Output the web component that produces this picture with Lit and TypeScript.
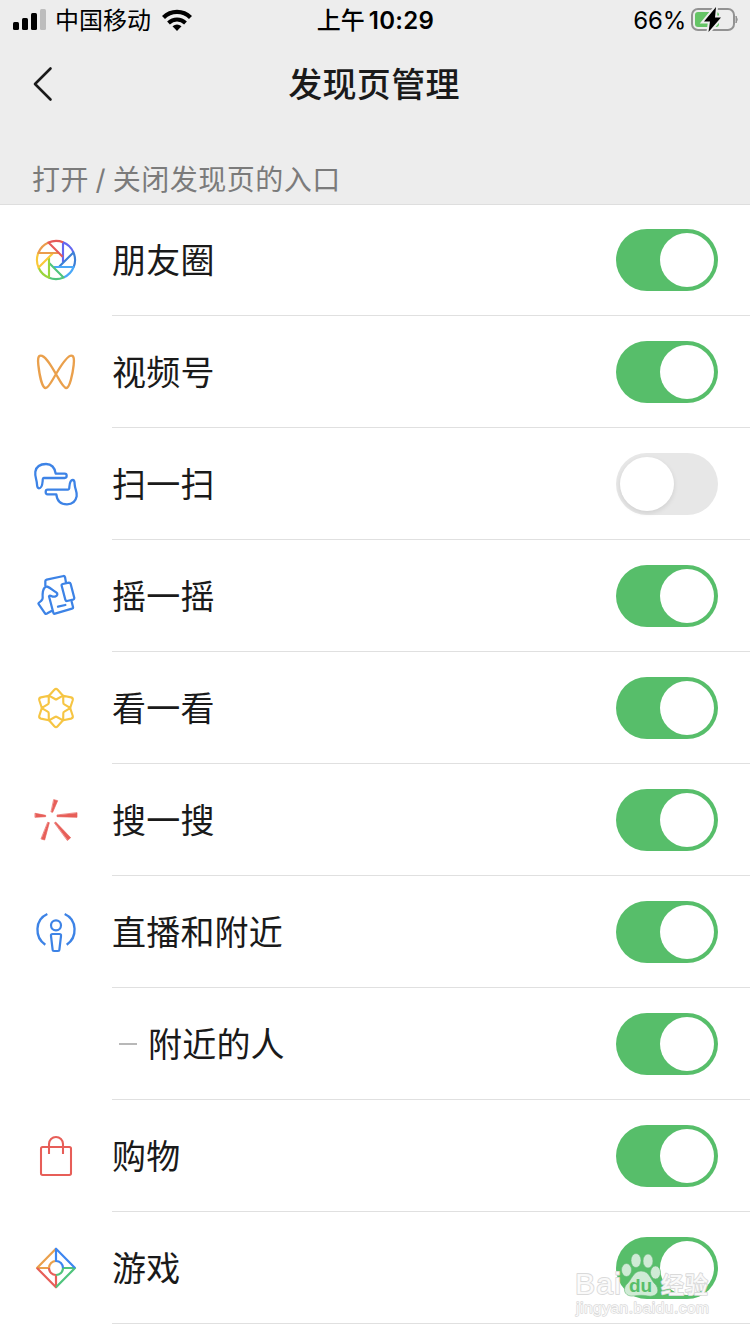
import { LitElement, html, svg, css, nothing, type SVGTemplateResult } from "lit";
import { customElement, property } from "lit/decorators.js";
import { classMap } from "lit/directives/class-map.js";

const BLUE = "#3d83e6";
const RED = "#e75e58";
const ORANGE = "#eaa04c";
const YELLOW = "#f6c543";

interface Icon {
  top: number;
  body: SVGTemplateResult;
}

const shutterColors = ["#6467f0", "#3d7fd6", "#4aa8f8", "#4fc47c", "#9ad53c", "#f9c93a", "#eb9c4c", "#e65a58"];

const icons: Record<string, Icon> = {
  moments: {
    top: 18,
    body: svg`${shutterColors.map(
      (c, i) => svg`<path transform="rotate(${i * 45} 108 90)" stroke=${c} stroke-width="6.400" stroke-linecap="butt"
        d="M129 97V37A57 57 0 0 1 160.500 67.500"/>`,
    )}`,
  },
  channels: {
    top: 24,
    body: svg`<path stroke=${ORANGE} stroke-width="7"
      d="M108 102C94 79 77 47 62 47C54 47 53 58 55 75C58 102 66 144 77 144C86 144 98 118 108 102C120 82 140 47 154 47C162 47 163 58 161 75C158 102 149 144 139 144C130 144 119 121 108 102Z"/>`,
  },
  scan: {
    top: 15,
    body: svg`<g stroke=${BLUE} stroke-width="6.800">
      <path d="M57 100C51 100 51 94 51 88C50 72 44 65 46 50C49 34 62 27 78 27C94 27 104 35 107 56H134C142 56 142 69 134 69H72C68 69 68 72 68 78C67 90 65 100 57 100Z"/>
      <path d="M158 75C164 75 164 82 164 88C165 104 172 109 170 124C167 140 155 148 141 148C122 148 111 138 109 118H83C75 118 75 104 83 104H143C148 104 148 101 148 96C149 85 151 75 158 75Z"/></g>`,
  },
  shake: {
    top: 21,
    body: svg`<g stroke=${BLUE} stroke-width="6.800">
      <path d="M76 62V48Q76 45 80 44L131 33Q134 33 135 36L138 53"/>
      <path d="M125 62Q124 58 128 57L147 53Q151 53 152 57L163 99Q163 103 159 104L141 108Q137 108 136 104Z"/>
      <path d="M155 110L159 126Q160 130 156 131L105 146Q101 147 100 143L87 94Q89 91 94 93C101 97 110 95 112 89Q113 85 108 82C97 76 94 70 82 65Q77 64 74 68C68 74 67 82 68 99Q68 104 63 108L56 114Q54 116 57 119L75 145Q78 148 82 145L96 137"/>
      <path d="M114 125L136 120"/></g>`,
  },
  look: {
    top: 12,
    body: svg`<g stroke=${YELLOW} stroke-width="6.400">${[0, 60, 120, 180, 240, 300].map(
      (a) => svg`<path transform="rotate(${a} 108 84)" d="M87 47L103 29Q108 24 113 29L129 47L111 57Q108 59 105 57Z"/>`,
    )}</g>`,
  },
  search: {
    top: 18,
    body: svg`<g fill=${RED} stroke=${RED} stroke-width="2">
      <path d="M102 29L113 32L98 67L94 66Z"/><path d="M46 70L77 76V80L46 82Z"/>
      <path d="M171 69V82L111 80V76Z"/><path d="M84 97L88 98L74 150L64 147Z"/>
      <path d="M104 98L107 96L152 143L143 151Z"/></g>`,
  },
  nearby: {
    top: 24,
    body: svg`<g stroke=${BLUE} stroke-width="6.600">
      <circle cx="108" cy="76" r="15"/><path d="M98 102H118Q124 102 123 108L118 150Q118 153 114 153H102Q98 153 98 150L93 108Q92 102 98 102Z"/>
      <path stroke-linecap="butt" stroke-width="7" d="M82 42C44 59 43 112 76 134M134 42C172 59 173 112 140 134"/></g>`,
  },
  shop: {
    top: 21,
    body: svg`<g stroke=${RED} stroke-width="6.200" stroke-linecap="butt">
      <rect x="63" y="66" width="90" height="84" rx="5"/><path d="M87 87V57A21 21 0 0 1 129 57V87"/></g>`,
  },
  games: {
    top: 357,
    body: svg`<g stroke-width="6.600" stroke-linecap="butt">
      <path stroke=${ORANGE} d="M107 372L51 429H87A21 21 0 0 1 108 408"/>
      <path stroke=${RED} d="M51 429L108 487V450A21 21 0 0 1 87 429"/>
      <path stroke="#4fc47c" d="M108 487L165 429H129A21 21 0 0 1 108 450"/>
      <path stroke="#3d86f0" d="M165 429L108 371V408A21 21 0 0 1 129 429"/></g>`,
  },
};

@customElement("toggle-switch")
class ToggleSwitch extends LitElement {
  @property({ type: Boolean }) on = false;
  static styles = css`
    :host { display: block; }
    .track { box-sizing: border-box; width: 102px; height: 62px; padding: 4px; border-radius: 31px; background: #e7e7e7; display: flex; }
    .track.on { background: #57be6a; justify-content: flex-end; }
    .thumb { width: 54px; height: 54px; border-radius: 50%; background: #fff; }
    .track:not(.on) .thumb { box-shadow: 0 2px 5px rgba(0, 0, 0, 0.1); }
  `;
  render() {
    return html`<div class=${classMap({ track: true, on: this.on })}><div class="thumb"></div></div>`;
  }
}

@customElement("entry-row")
class EntryRow extends LitElement {
  @property() icon = "";
  @property() label = "";
  @property({ type: Boolean }) on = false;
  @property({ type: Boolean }) sub = false;
  static styles = css`
    :host { display: flex; height: 112px; }
    .icon { width: 48px; height: 48px; margin: 32px 32px 0; flex: none; }
    svg { display: block; width: 48px; height: 48px; }
    .body { flex: 1; box-sizing: border-box; border-bottom: 1px solid #e0e0e0; display: flex; align-items: center; padding: 1px 32px 0 0; }
    .dash { width: 18px; height: 2px; background: #b8b8b8; margin: 0 11px 0 7px; }
    .label { flex: 1; padding-top: 2px; font-size: 34px; line-height: 48px; letter-spacing: 0.2px; color: #1a1a1a; }
  `;
  render() {
    const icon = icons[this.icon];
    return html`
      <div class="icon">
        ${icon
          ? html`<svg viewBox="36 ${icon.top} 144 144" fill="none" stroke-linecap="round" stroke-linejoin="round">${icon.body}</svg>`
          : nothing}
      </div>
      <div class="body">
        ${this.sub ? html`<div class="dash"></div>` : nothing}
        <div class="label">${this.label}</div>
        <toggle-switch ?on=${this.on}></toggle-switch>
      </div>`;
  }
}

const rows = [
  { icon: "moments", label: "朋友圈", on: true },
  { icon: "channels", label: "视频号", on: true },
  { icon: "scan", label: "扫一扫", on: false },
  { icon: "shake", label: "摇一摇", on: true },
  { icon: "look", label: "看一看", on: true },
  { icon: "search", label: "搜一搜", on: true },
  { icon: "nearby", label: "直播和附近", on: true },
  { icon: "", label: "附近的人", on: true, sub: true },
  { icon: "shop", label: "购物", on: true },
  { icon: "games", label: "游戏", on: true },
];

@customElement("app-root")
class AppRoot extends LitElement {
  static styles = css`
    :host { display: block; position: relative; width: 750px; height: 1334px; overflow: hidden; background: #fff; font-family: Inter, "Noto Sans CJK SC", sans-serif; color: #000; }
    .head { box-sizing: border-box; height: 205px; background: #ededed; border-bottom: 1px solid #dedede; }
    .status { display: grid; grid-template-columns: 1fr auto 1fr; align-items: center; height: 40px; padding: 0 11px 0 13px; font-size: 24px; line-height: 38px; }
    .status span { padding-top: 2px; }
    .left, .right { display: flex; align-items: center; }
    .right { justify-content: flex-end; }
    .signal { width: 33px; height: 22px; margin-right: 9px; }
    .wifi { width: 30px; height: 23px; margin-left: 11px; }
    .time { font-weight: 600; letter-spacing: 0.3px; display: flex; gap: 4px; }
    .time .zh { font-weight: 500; letter-spacing: 0; margin-left: -1px; }
    .battery { width: 49px; height: 26px; margin-left: 4px; }
    .pct { letter-spacing: -0.2px; }
    .nav { display: grid; grid-template-columns: 100px 1fr 100px; align-items: center; height: 88px; }
    .back { width: 24px; height: 36px; margin-left: 31px; }
    .title { text-align: center; padding: 2px 2px 0 0; font-size: 34px; line-height: 48px; font-weight: 500; letter-spacing: 0.3px; color: #1a1a1a; }
    .section { padding: 32px 32px 0; font-size: 28px; line-height: 40px; letter-spacing: 0.5px; word-spacing: -1.8px; color: #7b7b7b; }
    .list { display: flex; flex-direction: column; margin-top: -1px; }
    .mark { position: absolute; left: 570px; top: 1245px; width: 150px; height: 76px; }
    .mark text { font-family: "Liberation Sans", "Noto Sans CJK SC", sans-serif; }
  `;
  render() {
    return html`
      <div class="head">
        <div class="status">
          <div class="left">
            <svg class="signal" viewBox="0 0 33 22"><rect y="13" width="6" height="8" rx="1.500"/><rect x="9" y="9" width="6" height="12" rx="1.500"/><rect x="18" y="4" width="6" height="17" rx="1.500"/><rect x="27" y="0" width="6" height="21" rx="1.500" fill="#bdbdbd"/></svg>
            <span>中国移动</span>
            <svg class="wifi" viewBox="0 0 30 23" fill="none" stroke="#000"><path stroke-width="4.200" d="M1.500 8.500C9 1 21 1 28.500 8.500"/><path stroke-width="4" d="M6.500 14C11.500 9.300 18.500 9.300 23.500 14"/><path fill="#000" stroke="none" d="M10.500 17.300Q15 13.600 19.500 17.300L15 22Z"/></svg>
          </div>
          <div class="time"><span class="zh">上午</span><span>10:29</span></div>
          <div class="right">
            <span class="pct">66%</span>
            <svg class="battery" viewBox="0 0 49 26"><rect x="2" y="2" width="42" height="21" rx="6" fill="none" stroke="#929292" stroke-width="2"/><rect x="5" y="5" width="24" height="15" rx="3" fill="#65c466"/><path d="M46 9Q48.500 12.500 46 16Z" fill="#929292" stroke="#929292"/><path d="M26 0L14 14.500H20L18.500 25L31 10.500H25Z" fill="#000" stroke="#ededed" stroke-width="4" paint-order="stroke"/></svg>
          </div>
        </div>
        <div class="nav">
          <svg class="back" viewBox="0 0 24 36" fill="none" stroke="#1a1a1a" stroke-width="2.600" stroke-linecap="round" stroke-linejoin="round"><path d="M19.500 2.500L4 18L19.500 33.500"/></svg>
          <div class="title">发现页管理</div>
        </div>
        <div class="section">打开 / 关闭发现页的入口</div>
      </div>
      <div class="list">
        ${rows.map((r) => html`<entry-row .icon=${r.icon} .label=${r.label} ?on=${r.on} ?sub=${!!r.sub}></entry-row>`)}
      </div>
      <svg class="mark" viewBox="570 1245 150 76">
        <g fill="#fff" fill-opacity="0.85" stroke="#dadada" stroke-width="1.800" paint-order="stroke" stroke-linejoin="round">
          <text x="575" y="1294" font-size="30" font-weight="400" textLength="46">Bai</text>
          <text x="661" y="1293" font-size="23" font-weight="500" textLength="47">经验</text>
          <text x="576" y="1313" font-size="15.500" textLength="133" stroke-width="1.400">jingyan.baidu.com</text>
        </g>
        <g fill="#cfebd5" stroke="#65b976" stroke-width="0.600">
          <ellipse cx="626.500" cy="1270" rx="5" ry="6.500"/><ellipse cx="636" cy="1260.500" rx="5" ry="7"/>
          <ellipse cx="648" cy="1261" rx="5" ry="7"/><ellipse cx="655.500" cy="1272.500" rx="5" ry="6.500"/>
          <path d="M641 1271C650 1271 650 1280 656 1285C661 1293 655 1297 648 1296C643 1295 639 1295 634 1296C626 1297 622 1291 626 1285C632 1280 633 1271 641 1271Z"/>
        </g>
        <text x="629" y="1292" font-size="19" font-weight="700" fill="#57be6a" textLength="23">du</text>
      </svg>`;
  }
}
